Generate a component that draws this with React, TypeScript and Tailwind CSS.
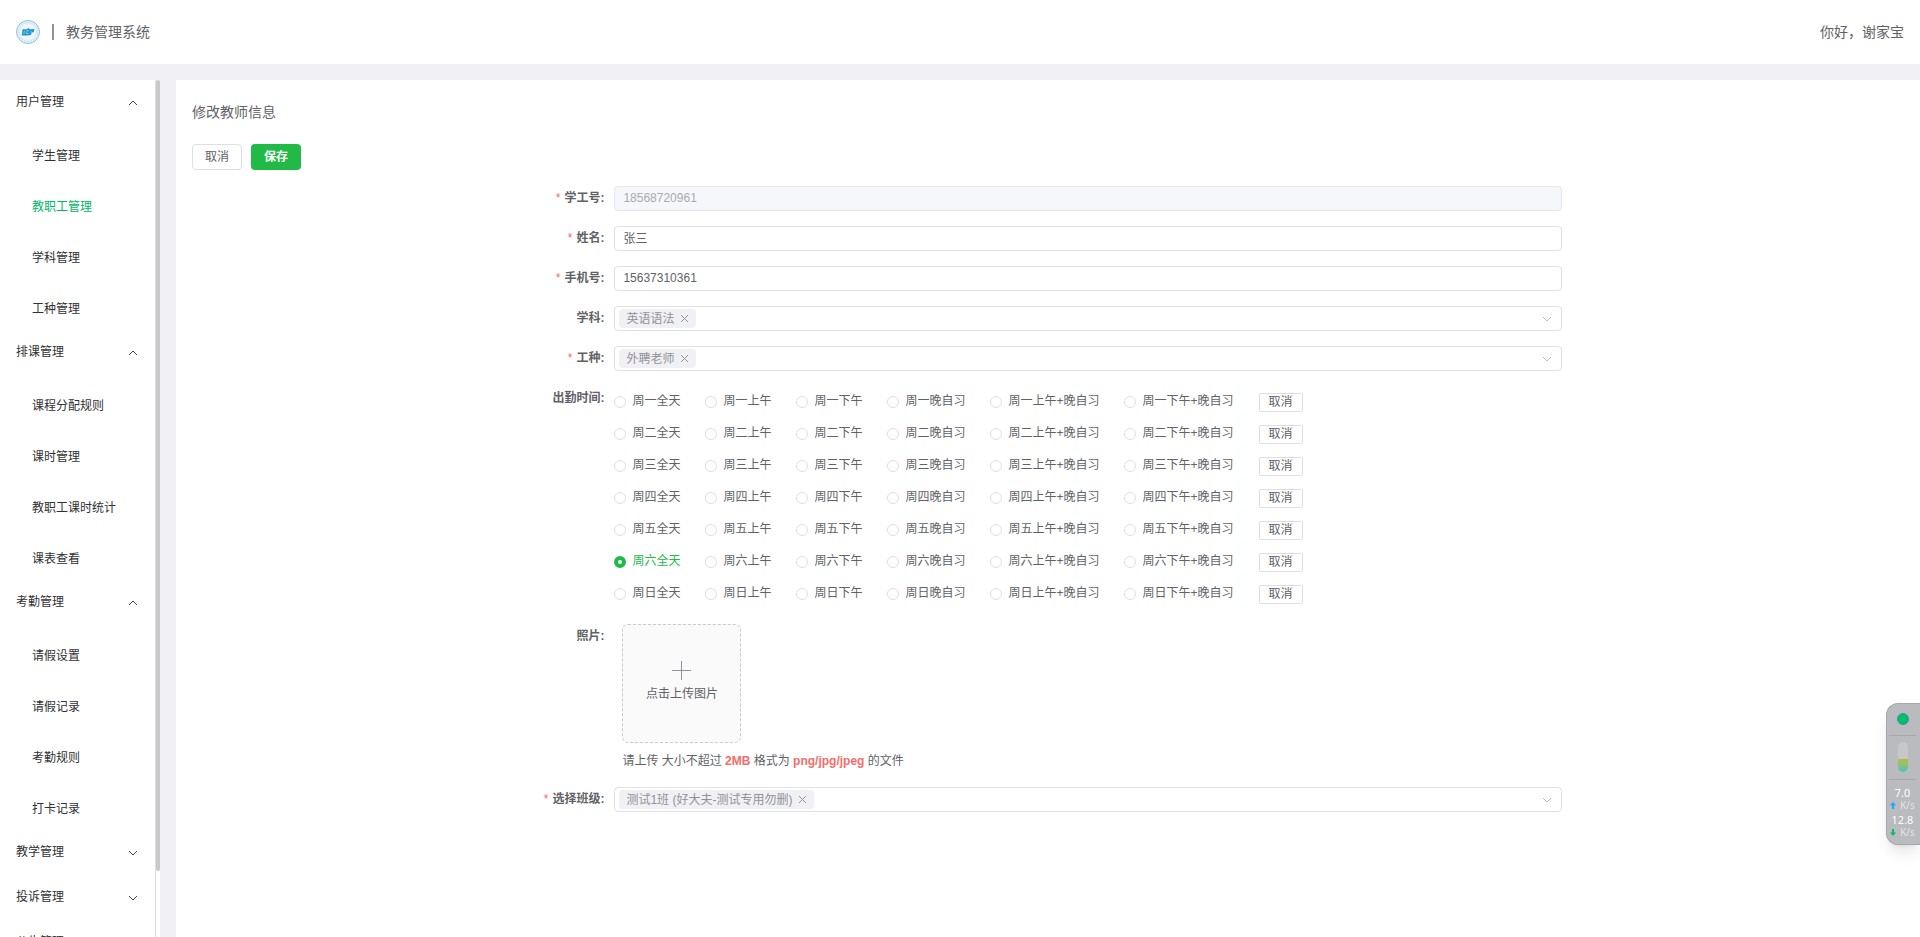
import { useState } from "react";
import type { ReactNode } from "react";

interface MenuGroup {
  title: string;
  open?: boolean;
  items?: string[];
}

const menu: MenuGroup[] = [
  { title: "用户管理", open: true, items: ["学生管理", "教职工管理", "学科管理", "工种管理"] },
  { title: "排课管理", open: true, items: ["课程分配规则", "课时管理", "教职工课时统计", "课表查看"] },
  { title: "考勤管理", open: true, items: ["请假设置", "请假记录", "考勤规则", "打卡记录"] },
  { title: "教学管理" },
  { title: "投诉管理" },
  { title: "公告管理" },
];

const days = ["一", "二", "三", "四", "五", "六", "日"];
const periods = ["全天", "上午", "下午", "晚自习", "上午+晚自习", "下午+晚自习"];

function Chevron({ up, className }: { up?: boolean; className?: string }) {
  return (
    <svg className={className} width="10" height="6" viewBox="0 0 10 6" fill="none" stroke="currentColor" strokeWidth=".9" aria-hidden="true">
      <path d={up ? "M1 5 5 1 9 5" : "M1 1 5 5 9 1"} />
    </svg>
  );
}

function Logo() {
  return (
    <svg width="24" height="24" viewBox="0 0 24 24" aria-hidden="true">
      <circle cx="12" cy="12" r="11.5" fill="#eaf3f7" stroke="#86c3df" />
      <circle cx="12" cy="12" r="9.5" fill="none" stroke="#bcdbe9" strokeWidth="1.5" strokeDasharray="1 1.2" />
      <circle cx="12" cy="12" r="8" fill="#f0f6f9" />
      <path d="M6.500 9.300h4.500l1.300-1.300 1.700 1.200 4.500-.2-.8 3.200-2 .4-.8 2.400-4 .6h-5.100z" fill="#1f97d4" />
      <path d="m8.500 10.800-.7 3.200M13.200 10.800h-2.400l-.6 2.600h2.600M14.200 12h1.800" fill="none" stroke="#a5d8f0" strokeWidth=".7" />
    </svg>
  );
}

function Header() {
  return (
    <header className="h-16 shrink-0 px-4 flex items-center justify-between bg-white text-[14px]">
      <div className="flex items-center">
        <Logo />
        <span className="ml-3 mr-3 w-0.5 h-4 bg-[#909399]" />
        <h1>教务管理系统</h1>
      </div>
      <span>你好，谢家宝</span>
    </header>
  );
}

function Sidebar({ active }: { active: string }) {
  return (
    <aside className="w-40 shrink-0 flex bg-white text-[#303133] overflow-hidden">
      <nav className="flex-1 h-full overflow-hidden border-r border-[#dcdfe6]">
        {menu.map((group) => (
          <div key={group.title}>
            <button
              type="button"
              aria-expanded={!!group.open}
              className={`w-full pl-4 pr-[17px] flex items-center justify-between ${group.open ? "h-[46px]" : "h-[45px]"}`}
            >
              <span className="pb-0.5">{group.title}</span>
              <Chevron up={group.open} />
            </button>
            {group.items?.map((item) => (
              <a
                key={item}
                href="#"
                className={`h-[51px] pt-2 pl-8 flex items-center ${item === active ? "text-[#00b868]" : ""}`}
              >
                {item}
              </a>
            ))}
          </div>
        ))}
      </nav>
      <div className="w-1 h-full">
        <div className="h-12/13 rounded-full bg-[#c9c9c9]" />
      </div>
    </aside>
  );
}

interface FieldProps {
  label: string;
  htmlFor?: string;
  required?: boolean;
  children: ReactNode;
}

function Field({ label, htmlFor, required, children }: FieldProps) {
  return (
    <div className="flex">
      <label htmlFor={htmlFor} className="w-20 shrink-0 pr-2.5 h-6 leading-6 text-right font-bold whitespace-nowrap">
        {required && <span className="mr-1 font-normal text-[#f56c6c]">*</span>}
        {label}:
      </label>
      <div className="flex-1 min-w-0">{children}</div>
    </div>
  );
}

function TextInput({ id, value, disabled }: { id: string; value: string; disabled?: boolean }) {
  return (
    <input
      id={id}
      type="text"
      defaultValue={value}
      disabled={disabled}
      className="block w-full h-[25px] px-2 pb-0.5 rounded-sm border border-[#e0e0e8] bg-white disabled:bg-[#f5f7fa] disabled:border-[#e4e7ed] disabled:text-[#a8abb2]"
    />
  );
}

function TagSelect({ id, tag }: { id: string; tag: string }) {
  return (
    <div className="h-[25px] pl-1 pr-[9px] flex items-center rounded-sm border border-[#e0e0e8]">
      <span className="h-[19px] pl-[7px] pr-[7px] flex items-center rounded-sm bg-[#f0f0f5] text-[#909399] whitespace-nowrap">
        {tag}
        <button type="button" aria-label={`移除${tag}`} className="ml-1.5">
          <svg width="9" height="9" viewBox="0 0 9 9" stroke="currentColor" aria-hidden="true">
            <path d="m1 1 7 7M8 1 1 8" />
          </svg>
        </button>
      </span>
      <select id={id} className="flex-1 h-full appearance-none bg-transparent outline-none">
        <option value="" />
      </select>
      <Chevron className="text-[#b4b8bf]" />
    </div>
  );
}

function Attendance() {
  const [selected, setSelected] = useState<Record<string, string>>({ 六: "全天" });

  return (
    <div role="radiogroup" aria-label="出勤时间" className="-mb-px">
      {days.map((day) => (
        <div key={day} className="h-8 flex items-center gap-[25px]">
          {periods.map((period) => {
            const checked = selected[day] === period;
            return (
              <label
                key={period}
                className={`flex items-center gap-1.5 whitespace-nowrap ${checked ? "text-[#22ba46]" : ""}`}
              >
                <input
                  type="radio"
                  name={`day-${day}`}
                  checked={checked}
                  onChange={() => setSelected({ ...selected, [day]: period })}
                  className="size-3 appearance-none rounded-full border border-[#dcdfe6] bg-white checked:border-4 checked:border-[#22ba46]"
                />
                <span className="pb-0.5">{`周${day}${period}`}</span>
              </label>
            );
          })}
          <button
            type="button"
            onClick={() => setSelected({ ...selected, [day]: "" })}
            className="w-11 h-[19px] flex items-center justify-center rounded-xs border border-[#dcdfe6] bg-white"
          >
            取消
          </button>
        </div>
      ))}
    </div>
  );
}

function Upload() {
  return (
    <div className="pl-2 pb-px">
      <button
        type="button"
        className="size-[119px] pb-0.5 flex flex-col items-center justify-center rounded-md border border-dashed border-[#c8c9cf] bg-[#fafafa]"
      >
        <svg width="19" height="19" viewBox="0 0 19 19" stroke="#8c939d" aria-hidden="true">
          <path d="M9.500 0v19M0 9.500h19" />
        </svg>
        <span className="mt-1 leading-5">点击上传图片</span>
      </button>
      <p className="mt-2 leading-5">
        请上传 大小不超过 <b className="text-[#f56c6c]">2MB</b> 格式为{" "}
        <b className="text-[#f56c6c]">png/jpg/jpeg</b> 的文件
      </p>
    </div>
  );
}

function Speed({ value, up }: { value: string; up?: boolean }) {
  return (
    <div className="mb-0.5 text-center">
      <div className="text-[11px] leading-[14px]">{value}</div>
      <div className="flex items-center gap-1 text-[10px] leading-[11px] text-[#e4e4e6] font-['Noto_Sans',sans-serif]">
        <svg width="6" height="7" viewBox="0 0 6 7" fill={up ? "#1ba8ff" : "#0bb968"} aria-hidden="true">
          <path d={up ? "M3 0 6 3.500H4V7H2V3.500H0z" : "M3 7 0 3.500h2V0h2v3.500h2z"} />
        </svg>
        K/s
      </div>
    </div>
  );
}

function NetMonitor() {
  return (
    <aside className="fixed right-0 top-[703px] w-[34px] h-[142px] pl-0.5 pr-1 flex flex-col items-center rounded-l-xl border border-r-0 border-[#a8a9ac] bg-[#babbbf] text-white shadow-lg font-['Noto_Sans',sans-serif]">
      <span className="mt-[9px] size-3 shrink-0 rounded-full border border-[#3f8fb0] bg-[#00c065]" />
      <div className="mt-2.5 w-full border-t border-[#a7a8ac]" />
      <div className="mt-1.5 w-2.5 h-[30px] shrink-0 flex items-end rounded-full bg-[#c6c7cb] overflow-hidden">
        <div className="w-full h-[13px] bg-linear-to-b from-[#b4bd2f] to-[#43c3b4]" />
      </div>
      <div className="mt-[7px] mb-1.5 w-full border-t border-[#a7a8ac]" />
      <Speed value="7.0" up />
      <Speed value="12.8" />
    </aside>
  );
}

export default function App() {
  return (
    <div className="h-screen flex flex-col bg-[#f0f0f5] text-[12px] text-[#606266] font-['Liberation_Sans','Noto_Sans_CJK_SC',sans-serif]">
      <Header />
      <div className="mt-4 flex-1 min-h-0 flex gap-4">
        <Sidebar active="教职工管理" />
        <main className="flex-1 min-w-0 p-4 bg-white overflow-hidden">
          <h2 className="h-8 leading-8 text-[14px]">修改教师信息</h2>
          <div className="mt-4 flex gap-[9px]">
            <button type="button" className="w-[50px] h-[26px] rounded-sm border border-[#dcdfe6] bg-white">
              取消
            </button>
            <button type="submit" form="teacher" className="w-[50px] h-[26px] rounded-sm bg-[#22ba46] text-white font-bold">
              保存
            </button>
          </div>
          <form id="teacher" className="mt-4 w-3/5 mx-auto flex flex-col gap-[15px]">
            <Field label="学工号" htmlFor="no" required>
              <TextInput id="no" value="18568720961" disabled />
            </Field>
            <Field label="姓名" htmlFor="name" required>
              <TextInput id="name" value="张三" />
            </Field>
            <Field label="手机号" htmlFor="phone" required>
              <TextInput id="phone" value="15637310361" />
            </Field>
            <Field label="学科" htmlFor="subject">
              <TagSelect id="subject" tag="英语语法" />
            </Field>
            <Field label="工种" htmlFor="job" required>
              <TagSelect id="job" tag="外聘老师" />
            </Field>
            <Field label="出勤时间">
              <Attendance />
            </Field>
            <Field label="照片">
              <Upload />
            </Field>
            <Field label="选择班级" htmlFor="class" required>
              <TagSelect id="class" tag="测试1班 (好大夫-测试专用勿删)" />
            </Field>
          </form>
        </main>
      </div>
      <NetMonitor />
    </div>
  );
}
